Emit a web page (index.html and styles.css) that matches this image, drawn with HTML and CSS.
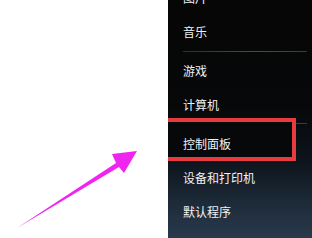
FILE: index.html
```html
<!DOCTYPE html>
<html lang="zh-CN">
<head>
<meta charset="UTF-8">
<title>开始菜单</title>
<link rel="stylesheet" href="styles.css">
</head>
<body>

<div class="shot">
	<div class="blank">
		<svg class="arrow" viewBox="0 0 168 238">
			<polygon points="17,228 116,163 112,154 137,151 124,173 119,167"></polygon>
		</svg>
	</div>

	<div class="menu">
		<div class="menu-list">
			<div class="menu-item">图片</div>
			<div class="menu-item">音乐</div>
			<div class="menu-sep"></div>
			<div class="menu-item">游戏</div>
			<div class="menu-item">计算机</div>
			<div class="menu-sep menu-sep-2"></div>
			<div class="menu-item menu-item-marked">
				控制面板
				<div class="mark"></div>
			</div>
			<div class="menu-item">设备和打印机</div>
			<div class="menu-item">默认程序</div>
		</div>
	</div>
</div>

</body>
</html>
```

FILE: styles.css
```css
html, body {
	margin: 0;
	padding: 0;
	background: #fff;
}
.shot {
	width: 312px;
	height: 238px;
	display: flex;
	overflow: hidden;
}

.blank {
	width: 168px;
	height: 238px;
	position: relative;
	background: #fff;
}
.arrow {
	position: absolute;
	top: 0;
	left: 0;
	width: 168px;
	height: 238px;
}
.arrow polygon {
	fill: #ef24ef;
}

.menu {
	flex: 1;
	height: 238px;
	overflow: hidden;
	background:
		radial-gradient(ellipse 70px 22px at 215px 212px, rgba(120,145,170,0.45), rgba(120,145,170,0) 100%),
		radial-gradient(ellipse 60px 18px at 280px 190px, rgba(100,125,150,0.35), rgba(100,125,150,0) 100%),
		linear-gradient(180deg, #060606 0%, #070809 45%, #0d141c 68%, #1d2a38 85%, #2a3a4c 100%);
	font-family: "Noto Sans CJK SC", "Noto Sans", sans-serif;
	font-size: 12px;
	color: #f2f2f2;
}
.menu-list {
	margin-top: -19px;
	padding-left: 15px;
}
.menu-item {
	height: 34px;
	line-height: 34px;
	position: relative;
}
.menu-sep {
	height: 5px;
	position: relative;
}
.menu-sep::after {
	content: "";
	position: absolute;
	left: 0;
	right: 5px;
	top: 2px;
	height: 1px;
	background: linear-gradient(90deg, #2e2e2e, #4a4a4a 60%, #3a3a3a);
}
.menu-sep-2::after {
	top: 1px;
}

.mark {
	position: absolute;
	left: -20px;
	top: -9px;
	width: 125px;
	height: 35px;
	border: 4px solid #e83b3f;
	background: #06080a;
	z-index: -1;
}
.menu-item-marked {
	z-index: 1;
}
.menu-item-marked .mark {
	z-index: -1;
}
```
